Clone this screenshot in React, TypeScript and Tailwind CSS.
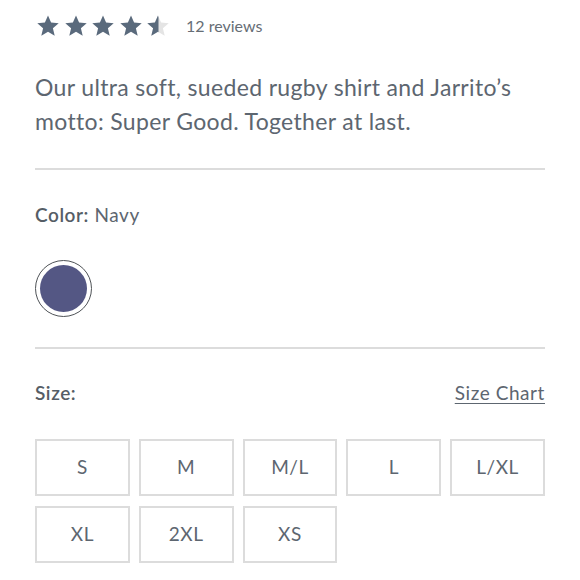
import React from 'react';

const sizes = ['S', 'M', 'M/L', 'L', 'L/XL', 'XL', '2XL', 'XS'];

const STAR = 'M12 1.5l3.1 7.1 7.6.7-5.8 5 1.8 7.5L12 17.8l-6.7 4 1.8-7.5-5.8-5 7.6-.7z';

const Star: React.FC<{ half?: boolean }> = ({ half }) => (
  <svg width="24" height="24" viewBox="0 0 24 24" className="shrink-0">
    <defs>
      <clipPath id="half-left">
        <rect x="0" y="0" width="12.5" height="24" />
      </clipPath>
    </defs>
    <path d={STAR} fill={half ? '#e4e4e4' : '#5a6a7c'} />
    {half && <path d={STAR} fill="#5a6a7c" clipPath="url(#half-left)" />}
  </svg>
);

const App: React.FC = () => {
  return (
    <div className="w-[580px] h-[580px] bg-white px-[35px] overflow-hidden text-[#5d6670] font-['Lato','Open_Sans',sans-serif]">
      <div className="flex items-center pt-[13px] h-[38px]">
        <div className="flex gap-[3.5px] ml-[1px]">
          <Star />
          <Star />
          <Star />
          <Star />
          <Star half />
        </div>
        <span className="ml-[16px] text-[16px] text-[#666d75]">12 reviews</span>
      </div>

      <p className="mt-[32px] text-[23px] leading-[34px] tracking-[0.015em] text-[#5d6670]">
        Our ultra soft, sueded rugby shirt and Jarrito’s motto: Super Good. Together at last.
      </p>

      <div className="mt-[30px] h-[2px] bg-[#dcdcdc]" />

      <div className="mt-[33px] text-[19px] leading-[24px] tracking-[0.03em]">
        <span className="font-semibold text-[#555d66]">Color:</span> Navy
      </div>

      <div className="mt-[33px] w-[57px] h-[57px] rounded-full border-[1.5px] border-[#4f5357] flex items-center justify-center">
        <div className="w-[47px] h-[47px] rounded-full bg-[#545784]" />
      </div>

      <div className="mt-[30px] h-[2px] bg-[#dcdcdc]" />

      <div className="mt-[32px] flex justify-between items-center text-[19px] leading-[24px] tracking-[0.03em]">
        <span className="font-semibold text-[#555d66]">Size:</span>
        <a className="underline underline-offset-[3px] text-[#5d6670]">Size Chart</a>
      </div>

      <div className="mt-[34px] grid grid-cols-5 gap-x-[9px] gap-y-[10px]">
        {sizes.map(s => (
          <button
            key={s}
            className="h-[57px] border-2 border-[#dcdcdc] flex items-center justify-center text-[19px] tracking-[0.03em] text-[#5d6670]"
          >
            {s}
          </button>
        ))}
      </div>
    </div>
  );
};

export default App;
